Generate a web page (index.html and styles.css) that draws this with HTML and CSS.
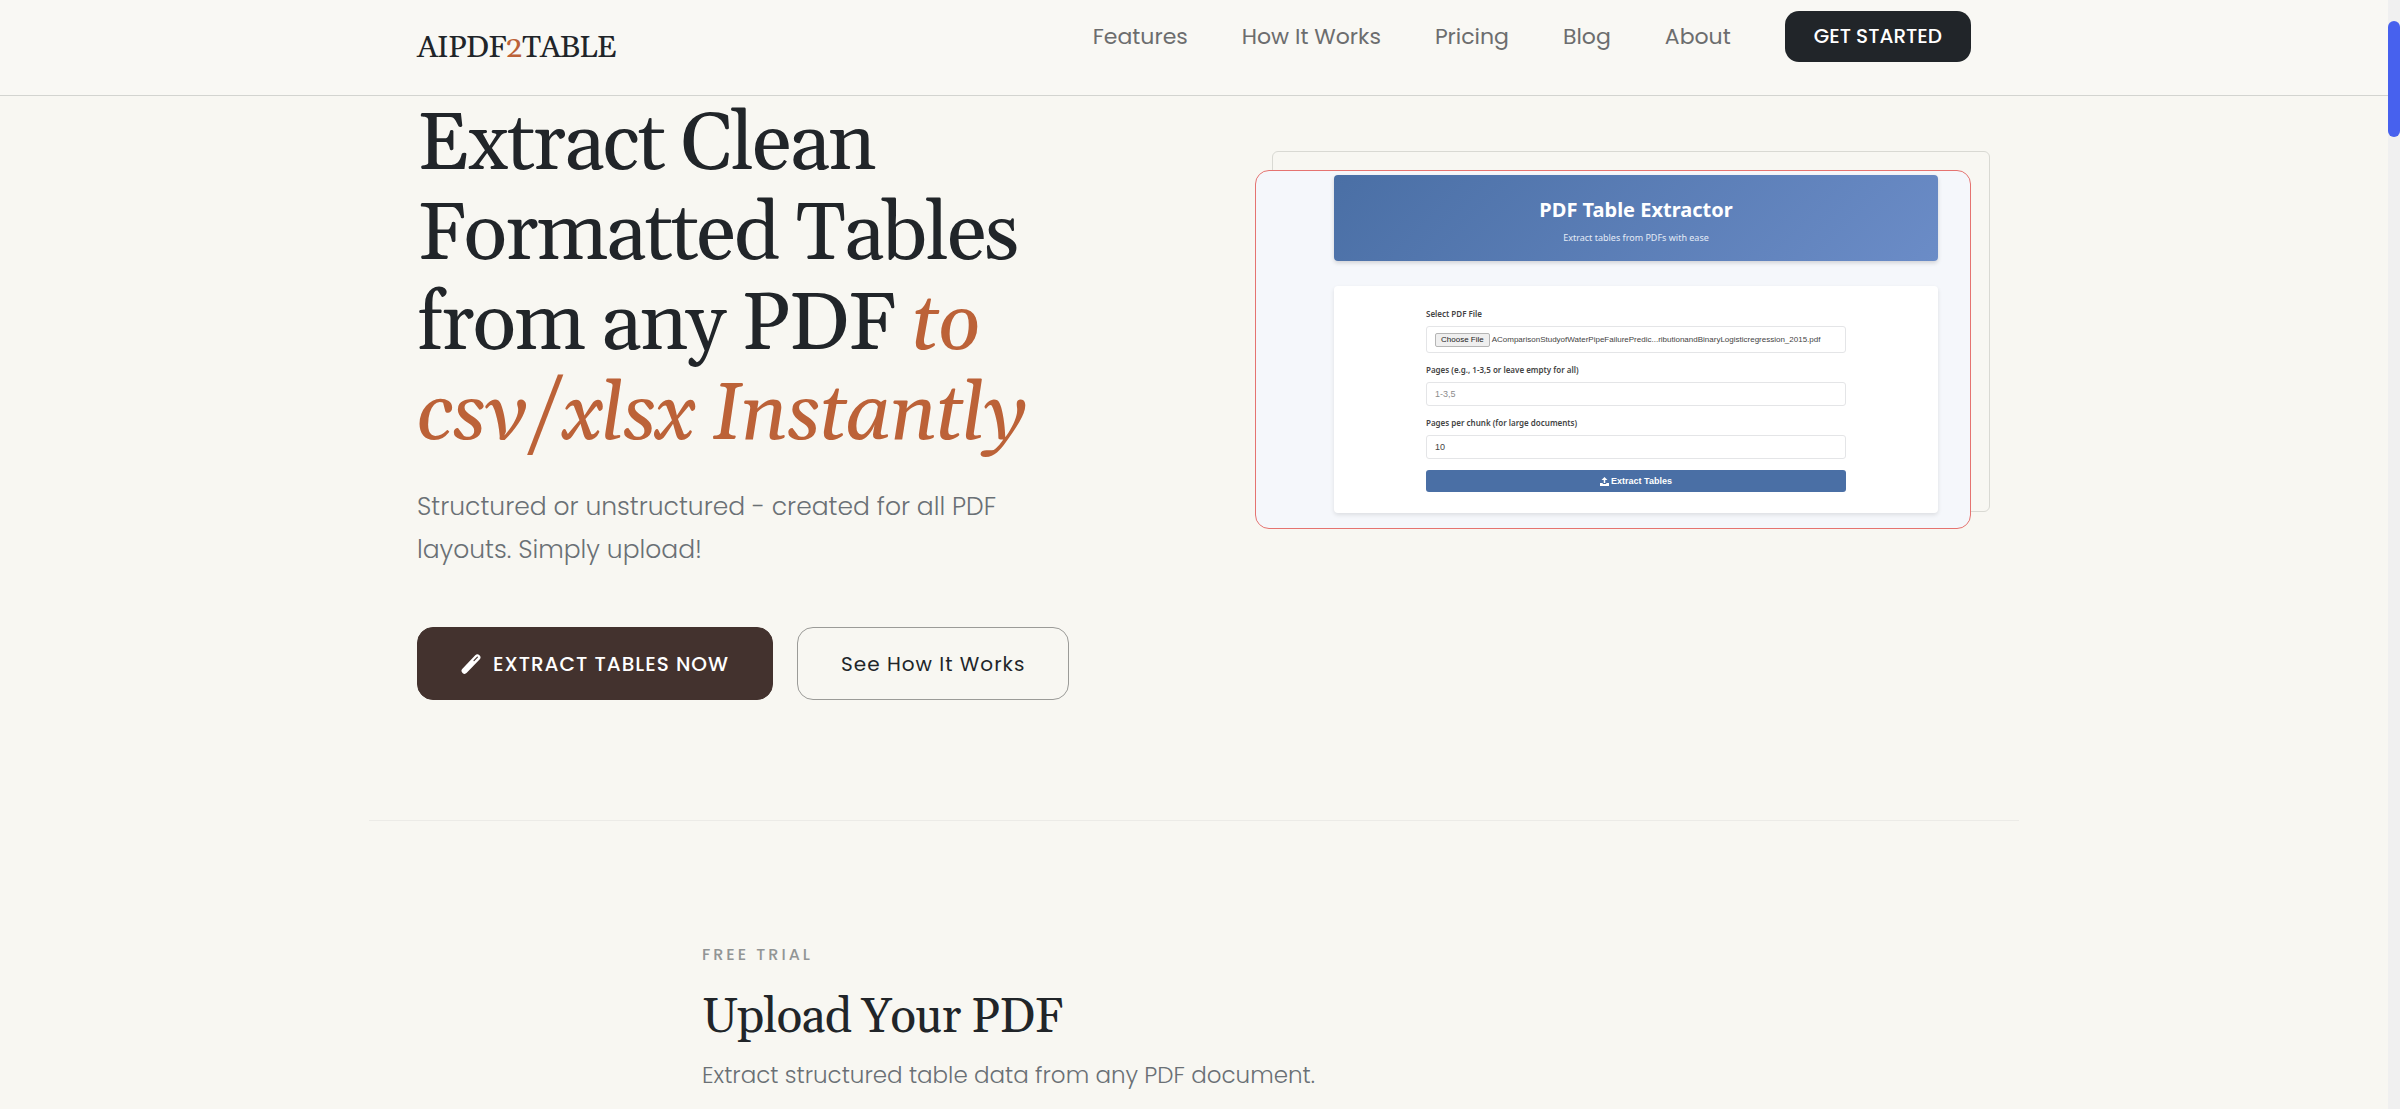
FILE: index.html
```html
<!DOCTYPE html>
<html lang="en">
<head>
    <meta charset="UTF-8">
    <meta name="viewport" content="width=device-width, initial-scale=1.0">
    <title>AIPDF2TABLE</title>
    <link rel="stylesheet" href="styles.css">
</head>
<body>
    <header class="header">
        <div class="container header-inner">
            <a href="#" class="logo">AIPDF<span>2</span>TABLE</a>
            <nav class="nav">
                <a href="#features">Features</a>
                <a href="#how">How It Works</a>
                <a href="#pricing">Pricing</a>
                <a href="#blog">Blog</a>
                <a href="#about">About</a>
                <a href="#upload" class="nav-cta">GET STARTED</a>
            </nav>
        </div>
    </header>

    <main>
        <section class="container hero">
            <div class="hero-text">
                <h1>Extract Clean<br>Formatted Tables<br>from any PDF <em>to<br>csv/xlsx Instantly</em></h1>
                <p>Structured or unstructured - created for all PDF<br>layouts. Simply upload!</p>
                <div class="hero-buttons">
                    <button type="button" class="btn btn-primary">
                        <svg width="20" height="22" viewBox="0 0 20 22" aria-hidden="true">
                            <path d="M3.6 17.8 16.4 4.4" stroke="#fff" stroke-width="6" stroke-linecap="round"/>
                            <path d="M13 7.6l3.4-3.4" stroke="#43322e" stroke-width="1.2" stroke-linecap="round"/>
                        </svg>
                        EXTRACT TABLES NOW
                    </button>
                    <button type="button" class="btn btn-outline">See How It Works</button>
                </div>
            </div>

            <div class="preview">
                <div class="screen">
                    <div class="banner">
                        <h2>PDF Table Extractor</h2>
                        <p>Extract tables from PDFs with ease</p>
                    </div>
                    <form class="extract-form">
                        <label for="choose">Select PDF File</label>
                        <div class="field file-field">
                            <button type="button" id="choose">Choose File</button>
                            <span>AComparisonStudyofWaterPipeFailurePredic...ributionandBinaryLogisticregression_2015.pdf</span>
                        </div>
                        <label for="pages">Pages (e.g., 1-3,5 or leave empty for all)</label>
                        <input class="field" type="text" id="pages" placeholder="1-3,5">
                        <label for="chunk">Pages per chunk (for large documents)</label>
                        <input class="field" type="text" id="chunk" value="10">
                        <button type="button" class="extract-btn">
                            <svg width="9" height="9" viewBox="0 0 18 18" aria-hidden="true">
                                <path d="M9 0 3 6h4.5v6h3V6H15zM0 12h5.5v2h7v-2H18v6H0z" fill="#fff"/>
                            </svg>
                            Extract Tables
                        </button>
                    </form>
                </div>
            </div>
        </section>

        <section class="upload" id="upload">
            <span class="eyebrow">FREE TRIAL</span>
            <h2>Upload Your PDF</h2>
            <p>Extract structured table data from any PDF document.</p>
        </section>
    </main>

    <div class="scroll-track"><div class="scroll-thumb"></div></div>
</body>
</html>
```

FILE: styles.css
```css
* {
    box-sizing: border-box;
    margin: 0;
    padding: 0;
}
body {
    background-color: #f8f7f2;
    color: #212529;
    font-family: Poppins, Inter, sans-serif;
    padding-right: 12px;
    overflow: hidden;
}
a {
    text-decoration: none;
}
.container {
    max-width: 1650px;
    margin: 0 auto;
    padding: 0 48px;
}

/* Header */
.header {
    background-color: #f9f8f4;
    border-bottom: 1px solid #d3d4d0;
}
.header-inner {
    display: flex;
    justify-content: space-between;
    align-items: flex-start;
    height: 95px;
    padding-top: 11px;
}
.logo {
    color: #212529;
    font-family: Georgia, Gelasio, "Liberation Serif", serif;
    font-size: 31px;
    font-variant-numeric: oldstyle-nums;
    letter-spacing: -1px;
    line-height: 34px;
    margin-top: 20px;
}
.logo span {
    color: #bc6238;
}
.nav {
    display: flex;
    align-items: center;
    gap: 54px;
}
.nav a {
    color: #6c6d6e;
    font-size: 22px;
    line-height: 51px;
}
.nav .nav-cta {
    background-color: #212529;
    border-radius: 14px;
    color: #fff;
    font-size: 20px;
    font-weight: 500;
    padding: 0 29px;
}

/* Hero */
.hero {
    display: grid;
    grid-template-columns: 1fr 1fr;
    gap: 122px;
    align-items: start;
    border-bottom: 1px solid #ecebe7;
    padding-top: 5px;
    padding-bottom: 120px;
}
.hero h1 {
    font-family: Georgia, Gelasio, "Liberation Serif", serif;
    font-size: 81px;
    font-weight: 400;
    letter-spacing: -2px;
    line-height: 90px;
    white-space: nowrap;
}
.hero h1 em {
    color: #bc6238;
}
.hero-text p {
    color: #6a7075;
    font-size: 25px;
    font-weight: 300;
    line-height: 43px;
    margin-top: 24px;
}
.hero-buttons {
    display: flex;
    gap: 24px;
    margin-top: 56px;
}
.btn {
    display: flex;
    align-items: center;
    gap: 12px;
    height: 73px;
    border: 1px solid #43322e;
    border-radius: 16px;
    font-family: inherit;
    font-size: 20px;
    letter-spacing: 1px;
    padding: 0 43px;
    white-space: nowrap;
}
.btn-primary {
    background-color: #43322e;
    color: #fff;
    font-weight: 500;
}
.btn-outline {
    background: none;
    border-color: #9b9b98;
    color: #212529;
}

/* Product preview */
.preview {
    position: relative;
    margin-top: 69px;
}
.preview::before {
    content: "";
    position: absolute;
    top: -19px;
    left: 17px;
    width: 100%;
    height: 100%;
    border: 1px solid #d9d9d3;
    border-radius: 6px;
}
.screen {
    position: relative;
    background-color: #f5f7fb;
    border: 1px solid #e57370;
    border-radius: 14px;
    font-family: "Noto Sans", sans-serif;
    padding: 4px 32px 15px 78px;
}
.banner {
    background: linear-gradient(135deg, #4a6fa5, #6b8cc7);
    border-radius: 4px;
    box-shadow: 0 2px 4px rgba(0, 0, 0, 0.15);
    color: #fff;
    height: 86px;
    padding-top: 21px;
    text-align: center;
}
.banner h2 {
    font-size: 20px;
    line-height: 28px;
}
.banner p {
    color: #e4ebf6;
    font-size: 9px;
    line-height: 12px;
    margin-top: 8px;
}
.extract-form {
    background-color: #fff;
    border-radius: 4px;
    box-shadow: 0 2px 4px rgba(0, 0, 0, 0.1);
    margin-top: 25px;
    padding: 22px 92px 21px;
}
.extract-form label {
    display: block;
    color: #444;
    font-size: 8px;
    font-weight: 600;
    line-height: 12px;
    margin-bottom: 6px;
}
.field {
    display: block;
    width: 100%;
    height: 24px;
    background-color: #fff;
    border: 1px solid #e4e5e7;
    border-radius: 3px;
    color: #444;
    font-family: "Liberation Sans", sans-serif;
    font-size: 9px;
    margin-bottom: 11px;
    padding: 0 8px;
}
.field::placeholder {
    color: #8b8b8b;
}
.file-field {
    display: flex;
    align-items: center;
    gap: 2px;
    height: 27px;
    font-size: 8px;
    white-space: nowrap;
}
.file-field button {
    background-color: #efefef;
    border: 1px solid #b5b5b5;
    border-radius: 2px;
    color: #222;
    font-family: inherit;
    font-size: 8px;
    line-height: 12px;
    padding: 0 5px;
}
.extract-btn {
    display: flex;
    align-items: center;
    justify-content: center;
    gap: 2px;
    width: 100%;
    height: 22px;
    background-color: #4a6fa5;
    border: none;
    border-radius: 3px;
    color: #fff;
    font-family: "Liberation Sans", sans-serif;
    font-size: 9px;
    font-weight: 700;
}

/* Upload */
.upload {
    max-width: 984px;
    margin: 0 auto;
    padding-top: 124px;
}
.eyebrow {
    display: block;
    color: #929595;
    font-size: 16px;
    font-weight: 500;
    letter-spacing: 3px;
    line-height: 20px;
}
.upload h2 {
    font-family: Georgia, Gelasio, "Liberation Serif", serif;
    font-size: 48px;
    font-weight: 400;
    letter-spacing: -1px;
    line-height: 60px;
    margin-top: 23px;
}
.upload p {
    color: #6a7075;
    font-size: 23px;
    font-weight: 300;
    line-height: 36px;
    margin-top: 9px;
}

/* Scroll indicator */
.scroll-track {
    position: fixed;
    top: 0;
    right: 0;
    bottom: 0;
    width: 12px;
    background-color: #f0f0f0;
    padding-top: 21px;
}
.scroll-thumb {
    height: 116px;
    background-color: #4761ee;
    border-radius: 6px;
}
```
